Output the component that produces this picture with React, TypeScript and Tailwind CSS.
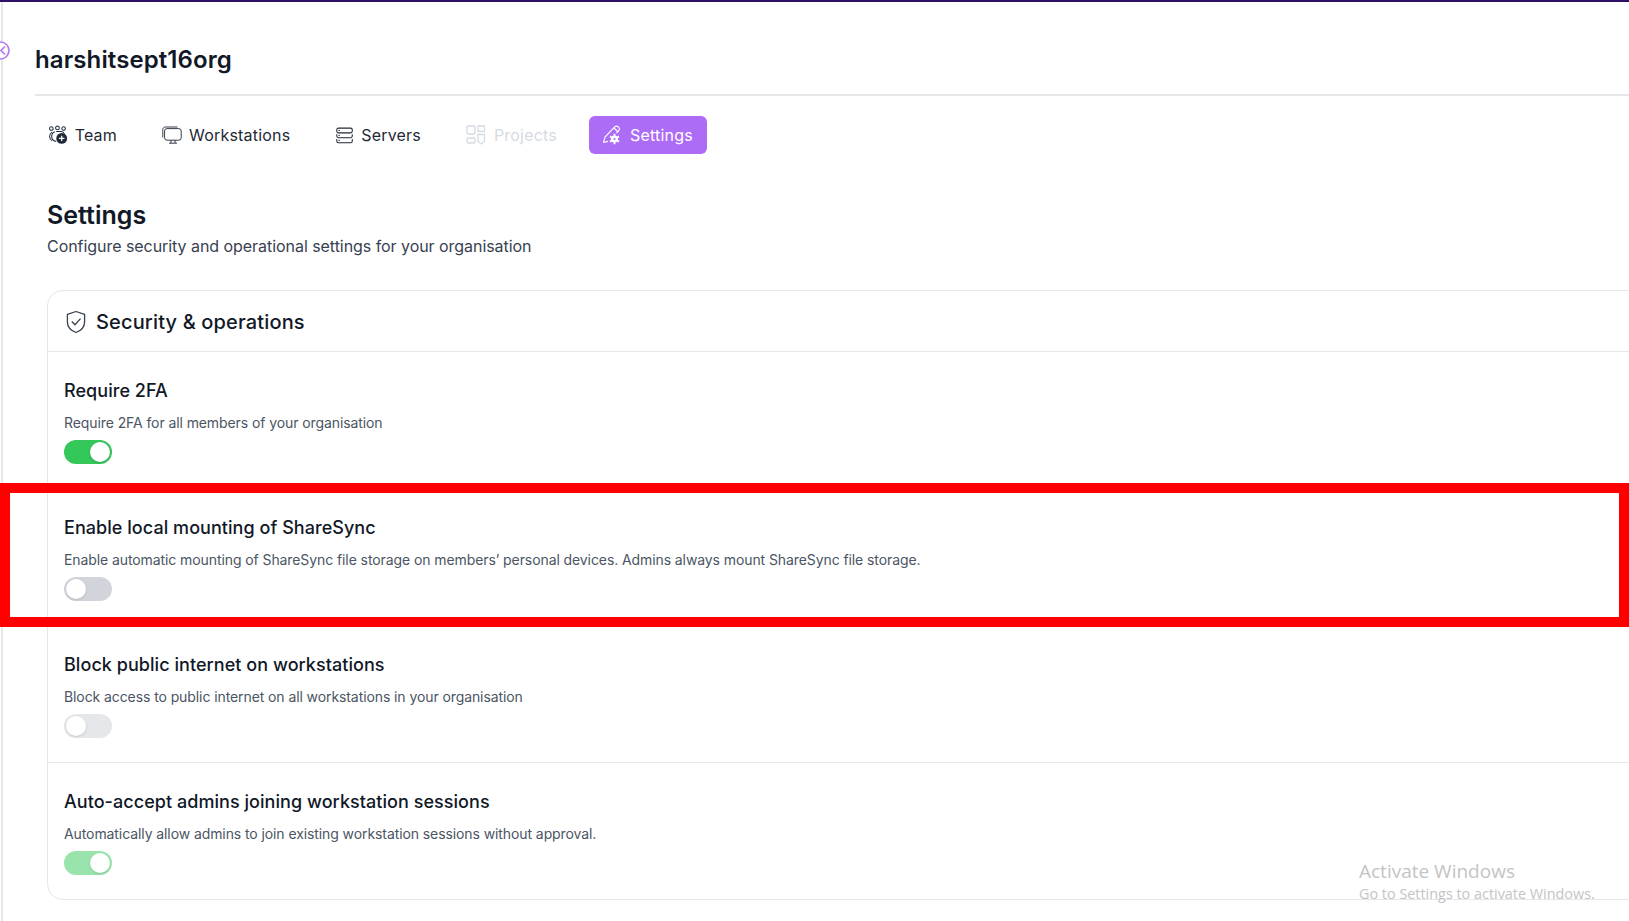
const font = 'font-["Inter","Noto_Sans",sans-serif]'

function TeamIcon() {
  return (
    <svg width="22" height="22" viewBox="0 0 22 22" fill="none" stroke="currentColor" strokeWidth="1.2">
      <circle cx="2.8" cy="3.4" r="2.1" />
      <circle cx="10" cy="2.6" r="2.2" />
      <circle cx="17.2" cy="3.4" r="2.1" />
      <path d="M3.5 7.6C1.4 8.8 .7 10.6 .7 12.8S1.6 16.6 3.5 17.6" />
      <path d="M7 7.2C4.4 8 3.2 10 3.2 12.8S5 18 8.4 18.6" />
      <path d="M8.5 6.8H14.5C16.4 6.8 17.6 8 18.2 9.6" />
      <circle cx="15" cy="15" r="6.4" fill="#1f2937" stroke="none" />
      <path d="M15 11.8V18.2M11.8 15H18.2" stroke="#fff" strokeWidth="1.5" />
    </svg>
  )
}

function MonitorIcon() {
  return (
    <svg width="20" height="20" viewBox="0 0 20 20" fill="none" stroke="currentColor" strokeWidth="0.9">
      <path d="M.8 12.5V4.5C.8 3 1.8 2 3.3 2H15.5" />
      <rect x="2.6" y="3.6" width="16.6" height="11.6" rx="2.4" />
      <path d="M9 15.2V18M13 15.2V18M7 18.2H15" />
    </svg>
  )
}

function ServerIcon() {
  return (
    <svg width="23" height="21" viewBox="0 0 23 21" fill="none" stroke="currentColor" strokeWidth="1.3">
      <path d="M3 7.2C1.8 7.2 1 6.4 1 5.2V3.2C1 2 1.8 1.2 3 1.2H18.5C19.7 1.2 20.5 2 20.5 3.2V5.2C20.5 6.4 19.7 7.2 18.5 7.2Z" />
      <path d="M1 8.8V11.2C1 12.4 1.8 13.2 3 13.2H18.5C19.7 13.2 20.5 12.4 20.5 11.2V8.8" />
      <path d="M1 14.8V17.6C1 18.8 1.8 19.6 3 19.6H18.5C19.7 19.6 20.5 18.8 20.5 17.6V14.8" />
      <path d="M3.6 4.2H4.4M3.6 10.2H4.4M3.6 16.4H4.4" strokeLinecap="round" />
    </svg>
  )
}

function ProjectsIcon() {
  return (
    <svg width="21" height="20" viewBox="0 0 21 20" fill="none" stroke="currentColor" strokeWidth="1.3">
      <rect x="1" y="1" width="8" height="8" rx="1" />
      <rect x="1" y="13" width="8" height="5" rx="1" />
      <path d="M12 1H18.5V6.5H12Z" />
      <path d="M12 9.5H18.5V16.5L15.2 19L12 16.5Z" />
    </svg>
  )
}

function SettingsIcon() {
  return (
    <svg width="21" height="20" viewBox="0 0 21 20" fill="none" stroke="currentColor" strokeWidth="1.1">
      <path d="M1.5 17.5L3 12L12.5 2.2C13.6 1.1 15.4 1 16.5 2.1C17.6 3.2 17.5 4.9 16.5 6L14.5 8" />
      <path d="M1.5 17.5L6 16.4" />
      <path d="M12 3L16 7" />
      <circle cx="12.5" cy="14" r="3.6" fill="#fff" stroke="none" />
      <path d="M12.5 8.8V19.2M8 11.4L17 16.6M8 16.6L17 11.4" stroke="#fff" strokeWidth="1.8" />
      <circle cx="12.5" cy="14" r="1.1" fill="#ad6cf5" stroke="none" />
    </svg>
  )
}

function ShieldIcon() {
  return (
    <svg width="20" height="24" viewBox="0 0 20 24" fill="none" stroke="#374151" strokeWidth="1.3">
      <path d="M10 1.5L18.6 4.4V12C18.6 17 15 20.6 10 22.5C5 20.6 1.4 17 1.4 12V4.4Z" strokeLinejoin="round" />
      <path d="M5.8 11.5L9 14.8L14.5 8.6" />
    </svg>
  )
}

const tabs = [
  { label: 'Team', icon: <TeamIcon />, w: 'w-[94px]', state: 'normal' },
  { label: 'Workstations', icon: <MonitorIcon />, w: 'w-[155px]', state: 'normal' },
  { label: 'Servers', icon: <ServerIcon />, w: 'w-[111px]', state: 'normal' },
  { label: 'Projects', icon: <ProjectsIcon />, w: 'w-[117px]', state: 'disabled' },
  { label: 'Settings', icon: <SettingsIcon />, w: 'w-[118px]', state: 'active' },
]

const rows = [
  { title: 'Require 2FA', desc: 'Require 2FA for all members of your organisation', toggle: 'on' },
  { title: 'Enable local mounting of ShareSync', desc: 'Enable automatic mounting of ShareSync file storage on members’ personal devices. Admins always mount ShareSync file storage.', toggle: 'off' },
  { title: 'Block public internet on workstations', desc: 'Block access to public internet on all workstations in your organisation', toggle: 'offFaded' },
  { title: 'Auto-accept admins joining workstation sessions', desc: 'Automatically allow admins to join existing workstation sessions without approval.', toggle: 'onFaded' },
]

function Toggle({ kind }: { kind: string }) {
  const on = kind === 'on' || kind === 'onFaded'
  let bg = 'bg-[#34c759]'
  if (kind === 'onFaded') bg = 'bg-[#98e4ac]'
  if (kind === 'off') bg = 'bg-[#d1d5db]'
  if (kind === 'offFaded') bg = 'bg-[#e5e7eb]'
  return (
    <div className={`flex h-6 w-12 items-center rounded-full p-0.5 ${bg} ${on ? 'justify-end' : 'justify-start'}`}>
      <div className="h-5 w-5 rounded-full bg-white shadow-sm" />
    </div>
  )
}

export default function App() {
  return (
    <div className={`relative h-[921px] w-full overflow-hidden bg-white text-[#111827] ${font}`}>
      <div className="h-0.5 bg-[#2e1065]" />

      <div className="flex h-[919px]">
        {/* sidebar rail */}
        <div className="ml-px w-0.5 bg-[#e5e7eb]" />

        <main className="min-w-0 flex-1">
          <div className="ml-[32px]">
            <h1 className="flex h-[92px] items-center pt-[24px] text-2xl font-semibold tracking-[0.1px]">harshitsept16org</h1>
            <div className="h-0.5 bg-[#e5e7eb]" />
          </div>

          <nav className="ml-[33px] mt-[20px] flex h-[38px] gap-[19px]">
            {tabs.map((t) => (
              <div
                key={t.label}
                className={`flex shrink-0 items-center gap-[7px] rounded-md px-[13px] text-base tracking-[0.2px] ${t.w} ${
                  t.state === 'active' ? 'bg-[#ad6cf5] text-white' : t.state === 'disabled' ? 'text-[#d5dbe3]' : 'text-[#1f2937]'
                }`}
              >
                {t.icon}
                <span>{t.label}</span>
              </div>
            ))}
          </nav>

          <div className="ml-[44px] mt-[46px]">
            <h2 className="text-[25px] font-semibold leading-[30px]">Settings</h2>
            <p className="mt-[4px] text-base tracking-[-0.05px] text-[#374151]">Configure security and operational settings for your organisation</p>
          </div>

          <section className="ml-[44px] mr-[-20px] mt-[32px] rounded-2xl border border-[#e5e7eb] bg-white">
            <div className="flex h-[60px] items-center gap-[10px] pl-[18px] pt-[1px]">
              <ShieldIcon />
              <h3 className="text-xl font-medium tracking-[0.15px]">Security &amp; operations</h3>
            </div>
            {rows.map((r, i) => (
              <div key={r.title} className={`h-[137px] border-t pl-4 pt-[25px] ${i === 0 || i === 3 ? 'border-[#e5e7eb]' : 'border-transparent'}`}>
                <h4 className="text-lg font-medium leading-7 tracking-[0.05px]">{r.title}</h4>
                <p className="mt-2 text-sm leading-5 tracking-[-0.09px] text-[#4b5563]">{r.desc}</p>
                <div className="mt-[7px]">
                  <Toggle kind={r.toggle} />
                </div>
              </div>
            ))}
          </section>
        </main>
      </div>

      {/* sidebar collapse button, half off the page */}
      <svg className="absolute left-[-9px] top-[41px]" width="19" height="19" viewBox="0 0 19 19" fill="#fff" stroke="#b57bf5" strokeWidth="1.7">
        <circle cx="9.5" cy="9.5" r="8.5" />
        <path d="M14 5.5L10 9.5L14 13.5" fill="none" />
      </svg>

      {/* red highlight frame drawn over the screenshot */}
      <div className="pointer-events-none absolute left-0 right-0 top-[483px] h-[144px] border-[10px] border-[#ff0000]" />

      {/* windows activation watermark */}
      <div className='pointer-events-none absolute left-[1359px] top-[858px] text-[#c4c4c4] font-["Open_Sans",sans-serif]'>
        <p className="text-[19px] leading-[26px]">Activate Windows</p>
        <p className="text-[14.4px] leading-[20px]">Go to Settings to activate Windows.</p>
      </div>
    </div>
  )
}
